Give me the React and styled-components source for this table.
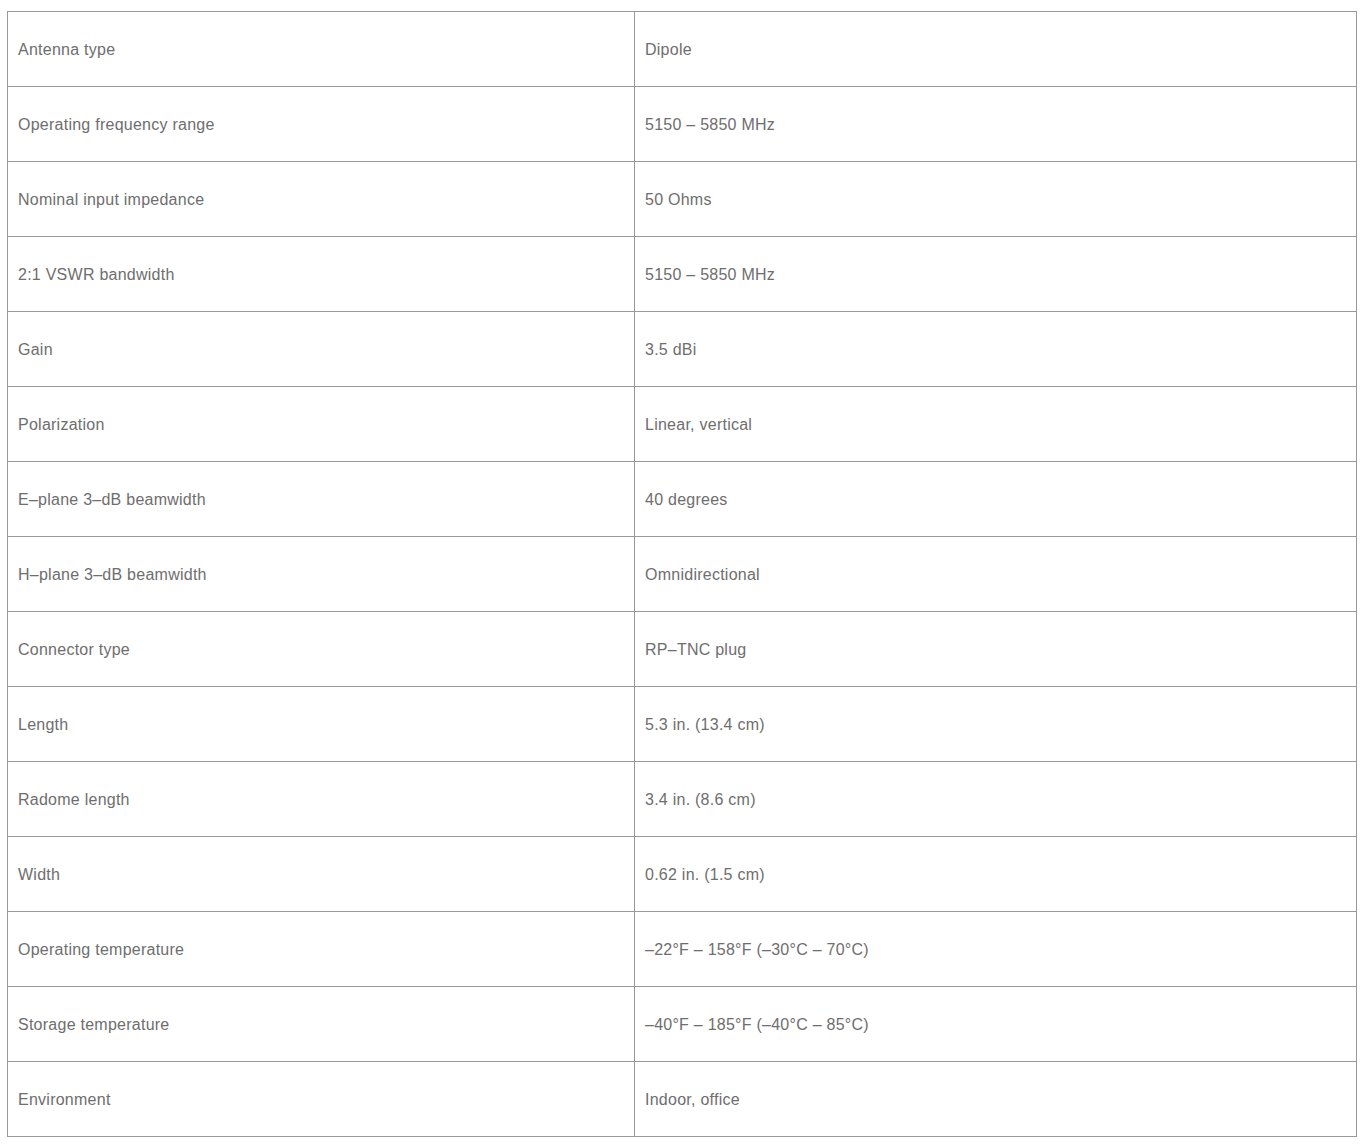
import React from "react";
import styled, { createGlobalStyle } from "styled-components";

const Global = createGlobalStyle`
  html, body { margin: 0; padding: 0; background: #fff; }
  body { padding: 11px 8px 0 7px; }
`;

const Table = styled.table`
  width: 1350px;
  border-collapse: collapse;
  font-family: "Liberation Sans", Arial, sans-serif;
  font-size: 16px;
  letter-spacing: 0.25px;
  color: #6e6e6e;
`;

const Cell = styled.td`
  border: 1px solid #999;
  height: 75px;
  padding: 2px 10px 0;
  box-sizing: border-box;
  vertical-align: middle;
  width: ${(p) => (p.$label ? "627px" : "auto")};
  font-weight: 400;
`;

const rows = [
  ["Antenna type", "Dipole"],
  ["Operating frequency range", "5150 – 5850 MHz"],
  ["Nominal input impedance", "50 Ohms"],
  ["2:1 VSWR bandwidth", "5150 – 5850 MHz"],
  ["Gain", "3.5 dBi"],
  ["Polarization", "Linear, vertical"],
  ["E–plane 3–dB beamwidth", "40 degrees"],
  ["H–plane 3–dB beamwidth", "Omnidirectional"],
  ["Connector type", "RP–TNC plug"],
  ["Length", "5.3 in. (13.4 cm)"],
  ["Radome length", "3.4 in. (8.6 cm)"],
  ["Width", "0.62 in. (1.5 cm)"],
  ["Operating temperature", "–22°F – 158°F (–30°C – 70°C)"],
  ["Storage temperature", "–40°F – 185°F (–40°C – 85°C)"],
  ["Environment", "Indoor, office"],
];

export default function App() {
  return (
    <>
      <Global />
      <Table>
        <tbody>
          {rows.map(([k, v]) => (
            <tr key={k}>
              <Cell $label>{k}</Cell>
              <Cell>{v}</Cell>
            </tr>
          ))}
        </tbody>
      </Table>
    </>
  );
}
